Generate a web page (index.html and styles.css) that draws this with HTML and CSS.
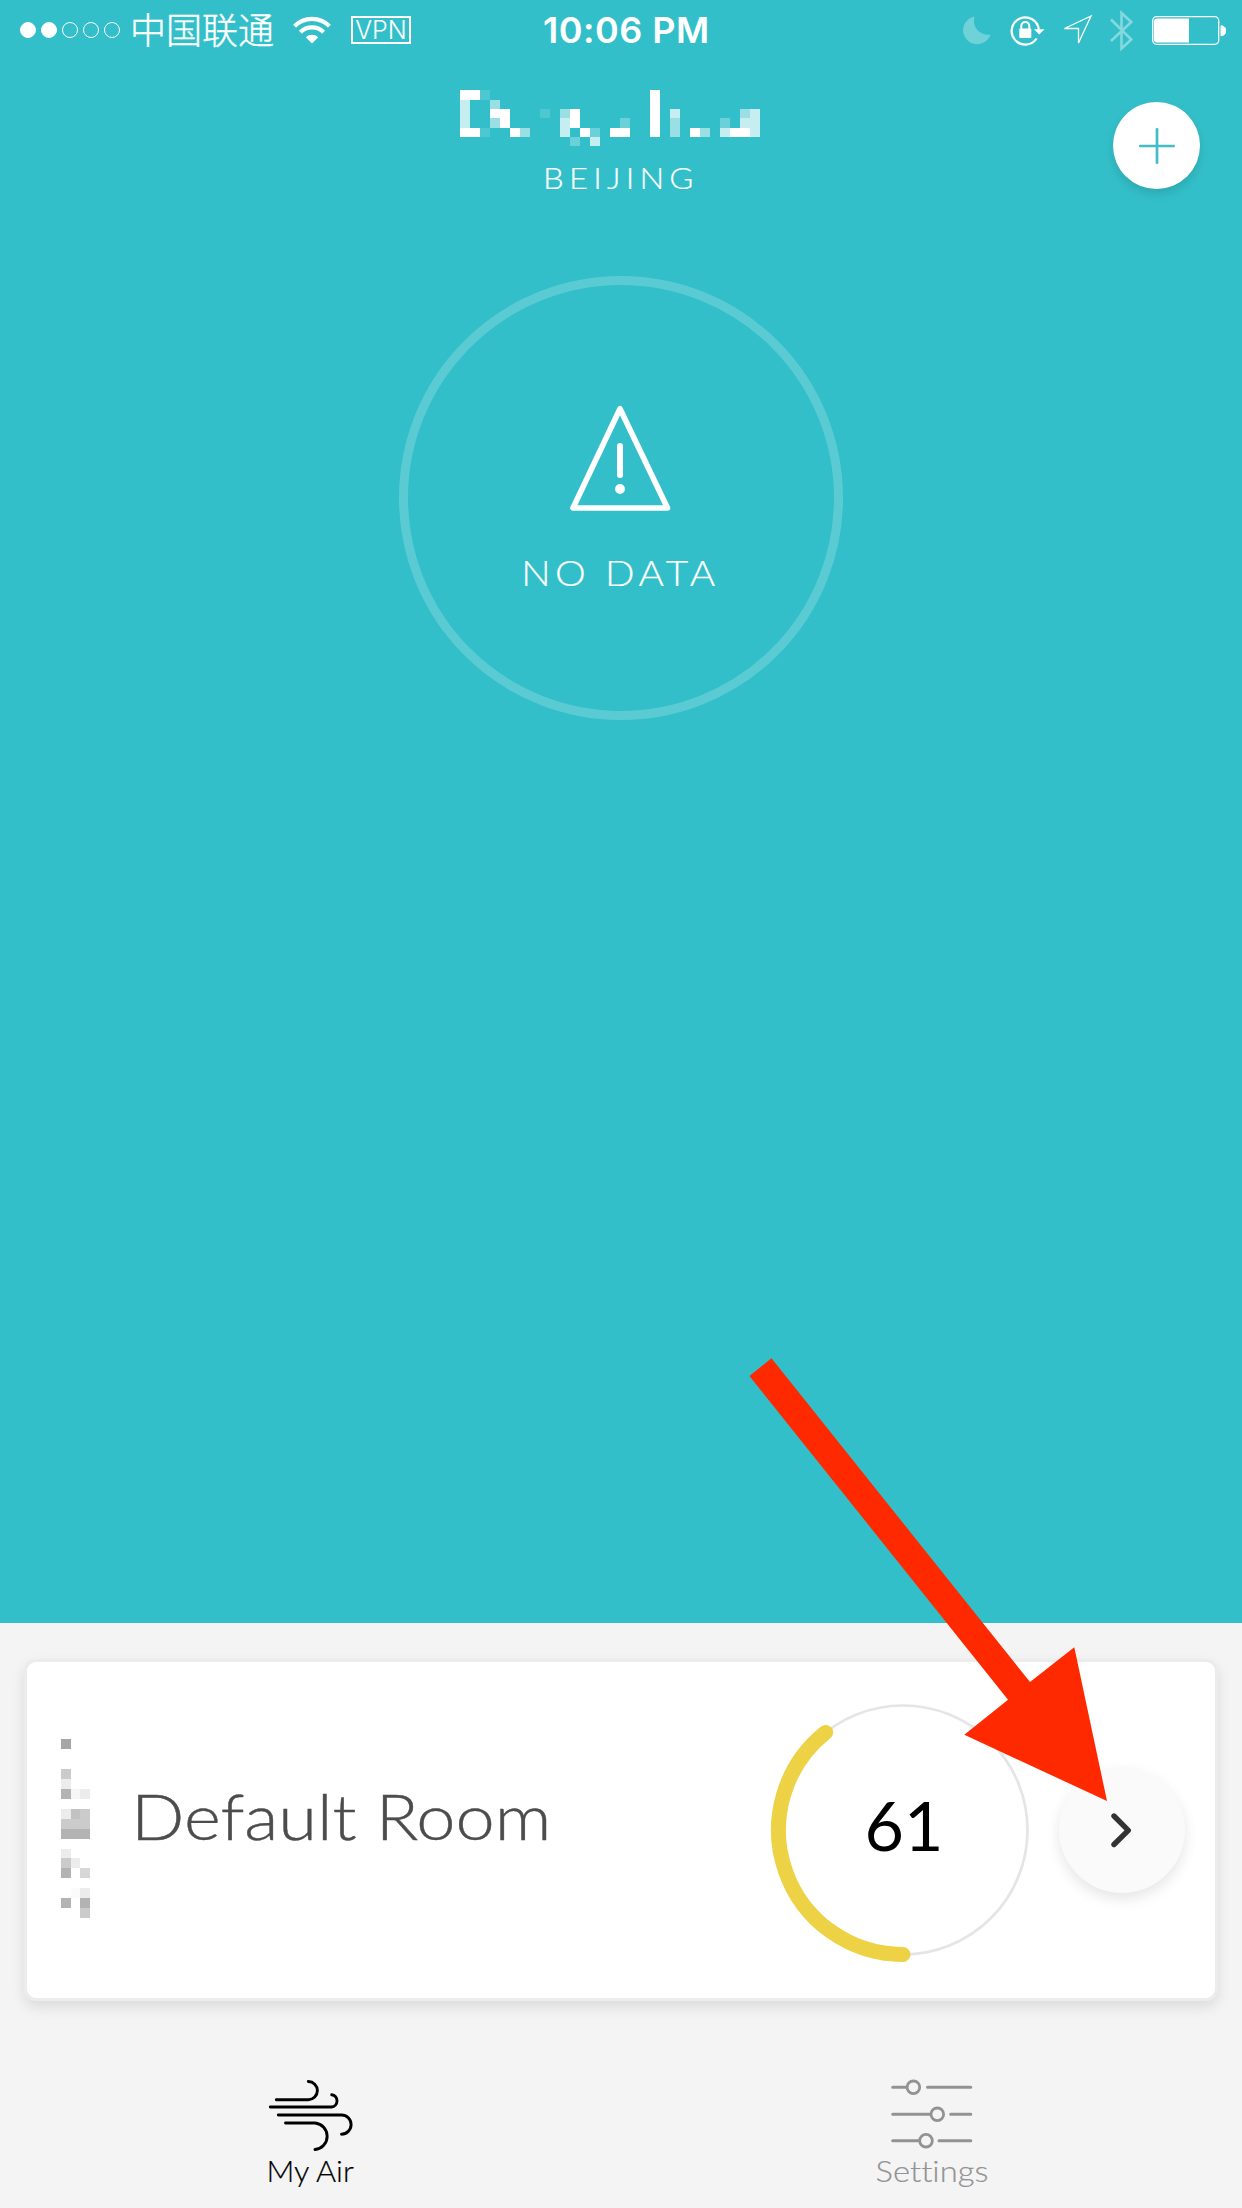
FILE: index.html
```html
<!DOCTYPE html>
<html lang="en">
<head>
<meta charset="utf-8">
<title>My Air</title>
<link rel="stylesheet" href="styles.css">
</head>
<body>
<div class="screen">
  <section class="hero">
    <div class="status">
      <div class="status-left">
        <div class="signal"><i class="dot on"></i><i class="dot on"></i><i class="dot"></i><i class="dot"></i><i class="dot"></i></div>
        <span class="carrier">中国联通</span>
        <svg class="wifi" width="38" height="28" viewBox="0 0 38 28"><g fill="none" stroke="#fff" stroke-width="4.2"><path d="M1.6 10.2a24.5 24.5 0 0 1 34.8 0"/><path d="M7.4 16.2a16.6 16.6 0 0 1 23.2 0"/></g><path d="M12.8 21.2a9 9 0 0 1 12.4 0L19 27.6z" fill="#fff"/></svg>
        <span class="vpn">VPN</span>
      </div>
      <span class="time">10:06 PM</span>
      <svg class="status-icons" width="266" height="48" viewBox="960 6 266 48">
        <path d="M974.5 16.5A14 14 0 1 0 990.5 34.5A14 14 0 0 1 974.5 16.5z" fill="#fff" opacity=".3"/>
        <path d="M1036.6 38.5A13.6 13.6 0 1 1 1038.8 29.5" fill="none" stroke="#fff" stroke-width="2.2"/>
        <path d="M1034 29.200h10.500l-5.200 5.400z" fill="#fff"/>
        <rect x="1019.300" y="28.500" width="12" height="9.500" rx="1" fill="#fff"/>
        <path d="M1021.300 29v-3a4 4 0 0 1 8 0v3" fill="none" stroke="#fff" stroke-width="2"/>
        <path d="M1091 16L1064.500 28.500H1078.500V43z" fill="none" stroke="#fff" stroke-width="1.300"/>
        <path d="M1111 19.500L1131.300 39.500L1121.500 48.500V13L1131.300 22L1111 41" fill="none" stroke="#fff" stroke-width="2.600" opacity=".4"/>
        <rect x="1152.700" y="16.700" width="66" height="27.600" rx="4" fill="none" stroke="#fff" stroke-width="1.300"/>
        <path d="M1157 18.500H1189V42.500H1157a3 3 0 0 1-3-3V21.500a3 3 0 0 1 3-3z" fill="#fff"/>
        <path d="M1221 25.800a5 5 0 0 1 0 10z" fill="#fff" stroke="#fff"/>
      </svg>
    </div>
    <header class="location">
      <svg class="mosaic" width="300" height="57" viewBox="460 90 300 57" shape-rendering="crispEdges" fill="#fff">
        <path d="M460 90h20v10h-20zM460 128h20v9h-20zM490 109h20v9h-20zM500 118h10v10h-10zM510 128h10v9h-10zM570 109h10v19h-10zM580 128h10v9h-10zM610 128h20v9h-20zM650 90h10v47h-10zM690 128h10v9h-10zM730 128h20v9h-20z"/>
        <path opacity=".72" d="M460 100h10v28h-10zM560 118h10v19h-10zM590 137h10v9h-10zM670 109h10v9h-10zM720 128h10v9h-10zM750 109h10v28h-10zM740 118h10v10h-10z"/>
        <path opacity=".5" d="M490 100h10v9h-10zM490 118h10v10h-10zM520 128h10v9h-10zM560 109h10v9h-10zM670 118h10v19h-10zM700 128h10v9h-10zM740 109h10v9h-10z"/>
        <path opacity=".28" d="M570 137h10v9h-10zM590 128h10v9h-10zM620 118h10v10h-10zM720 118h10v10h-10z"/>
        <path opacity=".13" d="M480 90h10v10h-10zM480 128h10v9h-10zM540 109h10v9h-10z"/>
      </svg>
      <span class="city">BEIJING</span>
      <button class="add" aria-label="Add"><svg width="38" height="38" viewBox="0 0 38 38"><path d="M19 2.300v33.400M2.300 19h33.400" stroke="#42bcc5" stroke-width="2.700" stroke-linecap="round"/></svg></button>
    </header>
    <div class="ring">
      <svg width="104" height="108" viewBox="568 404 104 108" fill="none" stroke="#fff" stroke-linecap="round" stroke-linejoin="round"><path d="M620 408.700L573 508H667.500z" stroke-width="5.600"/><path d="M620 446v29" stroke-width="6"/><circle cx="620" cy="489" r="4.900" fill="#fff" stroke="none"/></svg>
      <span class="nodata">NO DATA</span>
    </div>
  </section>

  <section class="card">
    <svg class="tag" width="29" height="180" viewBox="61 1739 29 180" shape-rendering="crispEdges">
      <path fill="#a6a6a6" d="M61 1739h10v10h-10z"/>
      <path fill="#b3b3b3" d="M61 1789h10v10h-10zM61 1829h29v10h-29zM61 1868h10v10h-10zM61 1898h10v10h-10zM80 1898h10v10h-10z"/>
      <path fill="#cbcbcb" d="M61 1769h10v10h-10zM71 1809h19v10h-19zM61 1819h29v10h-29zM61 1858h10v10h-10zM80 1908h10v10h-10z"/>
      <path fill="#d7d7d7" d="M80 1868h10v10h-10z"/>
      <path fill="#ececec" d="M61 1779h10v10h-10zM80 1789h10v10h-10zM61 1809h10v10h-10zM61 1849h10v9h-10zM71 1858h9v10h-9zM80 1888h10v10h-10z"/>
      <path fill="#f6f6f6" d="M71 1789h9v10h-9z"/>
      <path fill="#fbfbfb" d="M71 1888h9v10h-9z"/>
      <path fill="#c2c2c2" d="M71 1809h9v10h-9z"/>
    </svg>
    <span class="room">Default Room</span>
    <div class="gauge">
      <svg width="266" height="266" viewBox="770 1696.800 266 266" fill="none"><circle cx="903" cy="1829.800" r="124.500" stroke="#e5e5e8" stroke-width="2.700"/><path d="M903 1954.300A124.500 124.500 0 0 1 825.700 1732.200" stroke="#ecd244" stroke-width="15" stroke-linecap="round"/></svg>
      <span class="value">61</span>
    </div>
    <button class="next" aria-label="Open room"><svg width="24" height="36" viewBox="0 0 24 36"><path d="M4 4L18.300 18.300L4 32.500" fill="none" stroke="#333" stroke-width="5.400" stroke-linecap="round" stroke-linejoin="round"/></svg></button>
  </section>

  <nav class="tabs">
    <a class="tab active">
      <svg width="90" height="76" viewBox="266 2077 90 76" fill="none" stroke="#000" stroke-width="2.900" stroke-linecap="round"><path d="M276.300 2099.700H308.300A9 9 0 0 0 308.300 2081.500M270.300 2107H331.500A6.200 6.200 0 0 0 331.700 2094.700M278.300 2115H341.500A9.500 9.500 0 0 1 341.500 2134.200M285.500 2123H315A13.300 13.300 0 0 1 315 2149.500"/></svg>
      <span class="label air">My Air</span>
    </a>
    <a class="tab">
      <svg width="90" height="76" viewBox="887 2077 90 76" fill="none" stroke="#929292" stroke-width="3" stroke-linecap="round"><path d="M892.700 2087.300H906M927.500 2087.300H970.800M892.700 2114.300H930M950.700 2114.300H970.800M892.700 2140.700H919M939 2140.700H970.800"/><g stroke-width="2.800"><circle cx="913.400" cy="2087.300" r="6.300"/><circle cx="937.300" cy="2114.300" r="6.300"/><circle cx="926" cy="2140.700" r="6.300"/></g></svg>
      <span class="label settings">Settings</span>
    </a>
  </nav>
  <svg class="pointer" width="360" height="446" viewBox="748 1357 360 446"><path d="M749.500 1376L771.500 1358.300L1030 1682L1074.300 1647.300L1107 1801L964.300 1734.800L1008 1699.700z" fill="#ff2900"/></svg>
</div>
</body>
</html>
```
FILE: styles.css
```css
* { box-sizing: border-box; }
body { margin: 0; background: #f4f4f4; font-family: Lato, "Noto Sans CJK SC", sans-serif; font-variant-ligatures: none; }
svg { display: block; flex: none; }
button { border: 0; padding: 0; display: flex; align-items: center; justify-content: center; border-radius: 50%; }
.screen { position: relative; width: 1242px; height: 2208px; overflow: hidden; display: flex; flex-direction: column; }

.hero { height: 1623px; flex: none; background: #33bfc9; color: #fff; display: flex; flex-direction: column; align-items: center; }
.status { width: 100%; height: 60px; padding: 0 16px 0 20px; display: grid; grid-template-columns: 523px 1fr auto; align-items: center; }
.status-left { display: flex; align-items: center; }
.signal { display: flex; gap: 5px; }
.dot { width: 16px; height: 16px; border: 1px solid #fff; border-radius: 50%; }
.dot.on { background: #fff; }
.carrier { font: 300 36px/56px "Noto Sans CJK SC", sans-serif; margin-left: 10px; padding-bottom: 4px; -webkit-text-stroke: .4px #fff; }
.wifi { margin-left: 19px; }
.vpn { width: 60px; height: 28px; margin-left: 20px; border: 2px solid #fff; font: 300 25px/25px Inter, sans-serif; text-align: center; }
.time { font: 600 36px/60px Inter, sans-serif; letter-spacing: .5px; }

.location { position: relative; width: 100%; height: 216px; padding-top: 30px; display: flex; flex-direction: column; align-items: center; }
.mosaic { margin-right: 22px; }
.city { margin-top: 13px; font-size: 29px; line-height: 36px; font-weight: 300; letter-spacing: 4.6px; transform: scaleX(1.13); -webkit-text-stroke: .2px; }
.add { position: absolute; left: 1113px; top: 42px; width: 87px; height: 87px; background: #fff; box-shadow: 0 5px 10px rgba(0,0,0,.12); }
.ring { width: 444px; height: 444px; border: 9px solid rgba(255,255,255,.2); border-radius: 50%; padding-top: 119px; display: flex; flex-direction: column; align-items: center; }
.ring svg { margin-right: 2px; }
.nodata { margin-top: 39px; margin-right: 2px; font-size: 35px; line-height: 42px; font-weight: 300; letter-spacing: 4px; transform: scaleX(1.11); -webkit-text-stroke: .2px; }

.card { width: 1194px; height: 342px; flex: none; margin: 36px 24px 0; border: 3px solid #ececec; border-radius: 12px; background: #fff; box-shadow: 0 6px 14px rgba(0,0,0,.1); padding: 0 30px 0 34px; display: flex; align-items: center; }
.tag { margin-top: -3px; }
.room { width: 633px; margin-left: 41px; margin-right: 1px; font-size: 64px; line-height: 80px; font-weight: 300; color: #4c4c4c; white-space: nowrap; margin-top: -28px; transform: scaleX(1.1); transform-origin: 0 50%; -webkit-text-stroke: .4px; }
.gauge { display: grid; place-items: center; margin-left: 5px; flex: none; }
.gauge > * { grid-area: 1 / 1; }
.value { font-size: 68px; line-height: 80px; color: #000; padding: 0 0 10px 2px; }
.next { width: 126px; height: 126px; margin-left: auto; background: #fafafa; box-shadow: 0 6px 14px rgba(0,0,0,.1); flex: none; }

.tabs { display: grid; grid-template-columns: 1fr 1fr; padding-top: 76px; }
.tab { display: flex; flex-direction: column; align-items: center; color: #929292; }
.tab.active { color: #000; }
.label { height: 36px; line-height: 36px; font-size: 29px; font-weight: 300; -webkit-text-stroke: .2px; }
.air { transform: scaleX(1.06); }
.settings { transform: scaleX(1.13); }
.pointer { position: absolute; left: 748px; top: 1357px; }
```
